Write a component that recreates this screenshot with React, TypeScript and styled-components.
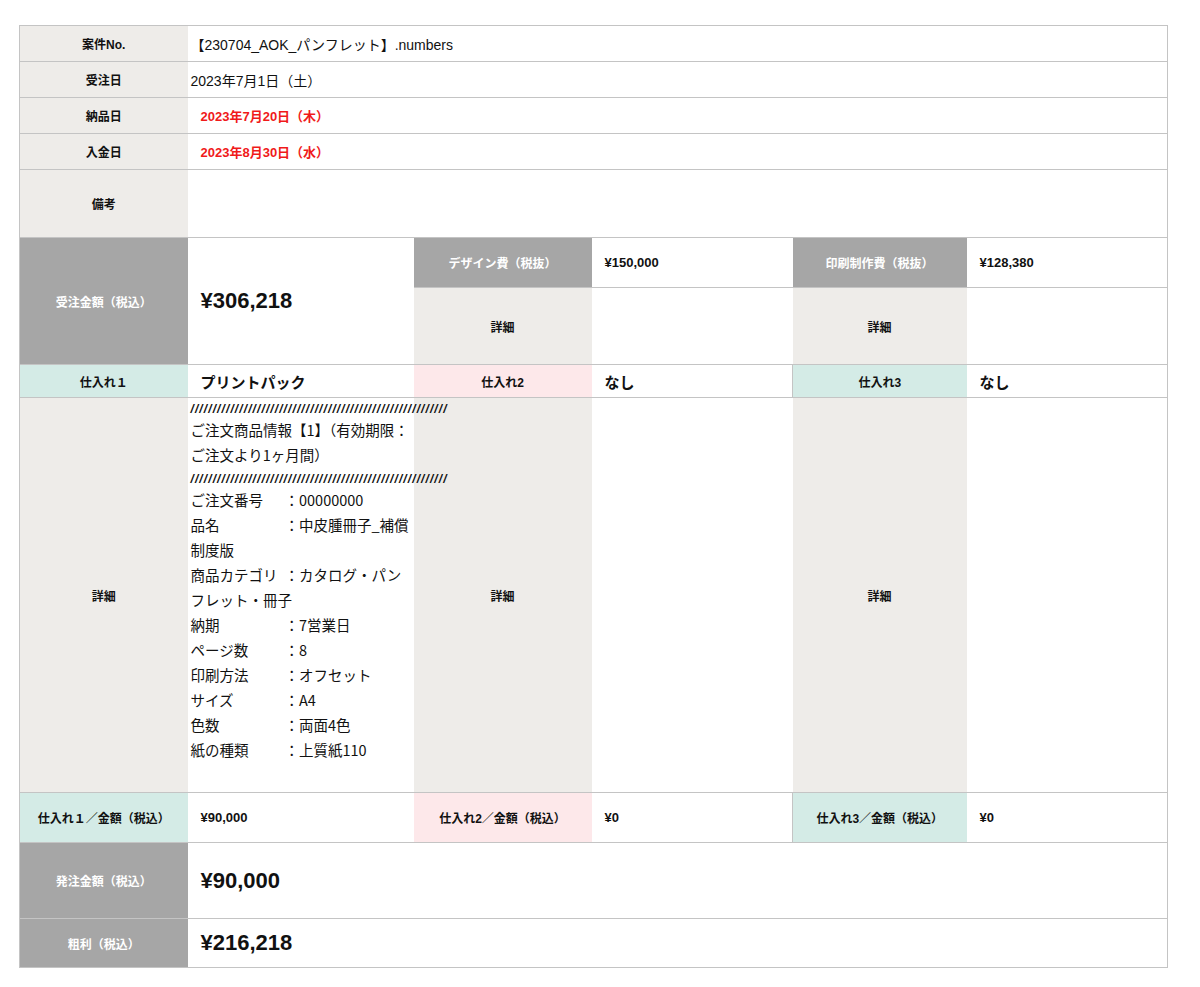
import React from 'react';
import styled, { createGlobalStyle } from 'styled-components';

const GlobalStyle = createGlobalStyle`
  body {
    margin: 0;
    background: #fff;
    font-family: "Liberation Sans", "Noto Sans CJK JP", sans-serif;
    color: #111;
  }
`;

const colors = {
  line: '#c4c4c4',
  beige: '#eeece9',
  gray: '#a6a6a6',
  mint: '#d4ebe6',
  pink: '#fde8ea',
  red: '#f01a1a'
};

const Page = styled.div`
  padding: 25px 0 0 19px;
`;

const Table = styled.table`
  border-collapse: collapse;
  width: 1148px;
  table-layout: fixed;
  border: 1px solid ${colors.line};
`;

const Row = styled.tr<{ h: number }>`
  height: ${({ h }) => h}px;
  border-bottom: 1px solid ${colors.line};
`;

type Tone = 'beige' | 'gray' | 'mint' | 'pink';

const Label = styled.th<{ tone?: Tone; edge?: boolean }>`
  background: ${({ tone = 'beige' }) => colors[tone]};
  color: ${({ tone }) => (tone === 'gray' ? '#fff' : '#111')};
  font-size: 12px;
  font-weight: 700;
  text-align: center;
  vertical-align: middle;
  padding: 0 4px;
  border-left: ${({ edge }) => (edge ? `1px solid ${colors.line}` : 'none')};
`;

const Value = styled.td<{ size?: number; bold?: boolean; red?: boolean; pad?: number }>`
  font-size: ${({ size = 14 }) => size}px;
  font-weight: ${({ bold }) => (bold ? 700 : 400)};
  color: ${({ red }) => (red ? colors.red : '#111')};
  padding: 0 0 0 ${({ pad = 3 }) => pad}px;
  vertical-align: middle;
`;

const DetailCell = styled.td`
  vertical-align: top;
  padding: 2px 2px 4px 3px;
  font-family: "Noto Sans CJK JP", sans-serif;
  font-size: 14.5px;
  line-height: 25px;
`;

const Slashes = styled.div`
  font-family: "Liberation Sans", sans-serif;
  font-size: 12px;
  line-height: 12px;
  font-weight: 700;
  font-style: italic;
  word-break: break-all;
  letter-spacing: 1.1px;
  margin: 6px 0 2px;
  &:first-child { margin-top: 3px; }
`;

const Item = styled.div``;

const Key = styled.span`
  display: inline-block;
  width: 94px;
`;

const slash = '/'.repeat(58);

const specs: [string, string][] = [
  ['ご注文番号', '：00000000'],
  ['品名', '：中皮腫冊子_補償制度版'],
  ['商品カテゴリ', '：カタログ・パンフレット・冊子'],
  ['納期', '：7営業日'],
  ['ページ数', '：8'],
  ['印刷方法', '：オフセット'],
  ['サイズ', '：A4'],
  ['色数', '：両面4色'],
  ['紙の種類', '：上質紙110']
];

export default function App() {
  return (
    <Page>
      <GlobalStyle />
      <Table>
        <colgroup>
          <col style={{ width: 168 }} />
          <col style={{ width: 226 }} />
          <col style={{ width: 178 }} />
          <col style={{ width: 201 }} />
          <col style={{ width: 174 }} />
          <col style={{ width: 201 }} />
        </colgroup>
        <tbody>
          <Row h={36}>
            <Label>案件No.</Label>
            <Value colSpan={5}>【230704_AOK_パンフレット】.numbers</Value>
          </Row>
          <Row h={36}>
            <Label>受注日</Label>
            <Value colSpan={5}>2023年7月1日（土）</Value>
          </Row>
          <Row h={36}>
            <Label>納品日</Label>
            <Value colSpan={5} size={13} bold red pad={13}>2023年7月20日（木）</Value>
          </Row>
          <Row h={36}>
            <Label>入金日</Label>
            <Value colSpan={5} size={13} bold red pad={13}>2023年8月30日（水）</Value>
          </Row>
          <Row h={68}>
            <Label>備考</Label>
            <Value colSpan={5} />
          </Row>
          <Row h={50}>
            <Label tone="gray" rowSpan={2}>受注金額（税込）</Label>
            <Value rowSpan={2} size={22} bold pad={13}>¥306,218</Value>
            <Label tone="gray">デザイン費（税抜）</Label>
            <Value size={13} bold pad={13}>¥150,000</Value>
            <Label tone="gray">印刷制作費（税抜）</Label>
            <Value size={13} bold pad={13}>¥128,380</Value>
          </Row>
          <Row h={77}>
            <Label>詳細</Label>
            <Value />
            <Label>詳細</Label>
            <Value />
          </Row>
          <Row h={33}>
            <Label tone="mint">仕入れ１</Label>
            <Value size={15} bold pad={13}>プリントパック</Value>
            <Label tone="pink">仕入れ2</Label>
            <Value size={15} bold pad={13}>なし</Value>
            <Label tone="mint" edge>仕入れ3</Label>
            <Value size={15} bold pad={13}>なし</Value>
          </Row>
          <Row h={395}>
            <Label>詳細</Label>
            <DetailCell>
              <Slashes>{slash}</Slashes>
              <Item>ご注文商品情報【1】（有効期限：ご注文より1ヶ月間）</Item>
              <Slashes>{slash}</Slashes>
              {specs.map(([k, v]) => (
                <Item key={k}>
                  <Key>{k}</Key>
                  {v}
                </Item>
              ))}
            </DetailCell>
            <Label>詳細</Label>
            <Value />
            <Label>詳細</Label>
            <Value />
          </Row>
          <Row h={50}>
            <Label tone="mint">仕入れ１／金額（税込）</Label>
            <Value size={13} bold pad={13}>¥90,000</Value>
            <Label tone="pink">仕入れ2／金額（税込）</Label>
            <Value size={13} bold pad={13}>¥0</Value>
            <Label tone="mint" edge>仕入れ3／金額（税込）</Label>
            <Value size={13} bold pad={13}>¥0</Value>
          </Row>
          <Row h={76}>
            <Label tone="gray">発注金額（税込）</Label>
            <Value colSpan={5} size={22} bold pad={13}>¥90,000</Value>
          </Row>
          <Row h={49}>
            <Label tone="gray">粗利（税込）</Label>
            <Value colSpan={5} size={22} bold pad={13}>¥216,218</Value>
          </Row>
        </tbody>
      </Table>
    </Page>
  );
}
